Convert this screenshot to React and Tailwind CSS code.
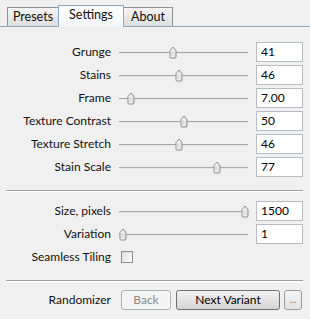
import React from "react";

const sliders1 = [
  { label: "Grunge", value: "41", pos: 0.41 },
  { label: "Stains", value: "46", pos: 0.46 },
  { label: "Frame", value: "7.00", pos: 0.065 },
  { label: "Texture Contrast", value: "50", pos: 0.5 },
  { label: "Texture Stretch", value: "46", pos: 0.46 },
  { label: "Stain Scale", value: "77", pos: 0.77 },
];

const sliders2 = [
  { label: "Size, pixels", value: "1500", pos: 1 },
  { label: "Variation", value: "1", pos: 0 },
];

function Thumb() {
  return (
    <svg width="9" height="13" viewBox="0 0 9 13" className="block">
      <defs>
        <linearGradient id="tg" x1="0" y1="0" x2="1" y2="0">
          <stop offset="0" stopColor="#ffffff" />
          <stop offset="1" stopColor="#dcdcdc" />
        </linearGradient>
      </defs>
      <path
        d="M1.5 4.5 L4.5 1 L7.5 4.5 L7.5 11 Q7.5 12 6.5 12 L2.5 12 Q1.5 12 1.5 11 Z"
        fill="url(#tg)"
        stroke="#8c8c8c"
        strokeWidth="1"
      />
      <line x1="3.5" y1="5" x2="3.5" y2="10" stroke="#c8c8c8" />
    </svg>
  );
}

function Slider({ pos }) {
  return (
    <div className="relative h-[23px] w-[129px]">
      <div className="absolute left-0 right-0 top-[12px] h-[2px] border-t border-[#a7a7a7] bg-[#e7e7e7]" />
      <div
        className="absolute top-[6px] -translate-x-1/2"
        style={{ left: `${4 + pos * 122}px` }}
      >
        <Thumb />
      </div>
    </div>
  );
}

function Row({ label, children }) {
  return (
    <div className="flex h-[23px] items-center">
      <div className="w-[111px] text-right">{label}</div>
      <div className="ml-[8px] flex items-center">{children}</div>
    </div>
  );
}

function SliderRow({ label, value, pos }) {
  return (
    <Row label={label}>
      <Slider pos={pos} />
      <div className="ml-[8px] flex h-[20px] w-[47px] items-center border border-[#b8bcc4] bg-white pl-[4px] text-black">
        {value}
      </div>
    </Row>
  );
}

function Separator() {
  return <div className="ml-[6px] mr-[7px] h-[2px] border-t border-[#a0a0a0] bg-white" />;
}

export default function App() {
  return (
    <div className="h-[319px] w-[310px] overflow-hidden bg-[#f0f0f0] font-['Lato',sans-serif] text-[12px] text-[#111]">
      <div className="relative flex h-[27px] items-end pl-[7px]">
        <div className="absolute bottom-0 left-0 right-0 h-px bg-[#8fa8c2]" />
        <div className="relative mb-px flex h-[19px] w-[52px] items-center justify-center border border-b-0 border-[#8d9299] bg-gradient-to-b from-[#f4f4f4] to-[#dedede] text-[12.5px]">
          Presets
        </div>
        <div className="relative z-10 -mx-px flex h-[22px] w-[66px] items-center justify-center border border-b-0 border-[#8fa8c2] bg-gradient-to-b from-white to-[#f3f6f9] pb-[2px] text-[12.5px]">
          Settings
        </div>
        <div className="relative mb-px flex h-[19px] w-[50px] items-center justify-center border border-b-0 border-[#8d9299] bg-gradient-to-b from-[#f4f4f4] to-[#dedede] text-[12.5px]">
          About
        </div>
      </div>

      <div className="pt-[13px]">
        {sliders1.map((s) => (
          <SliderRow key={s.label} {...s} />
        ))}
      </div>

      <div className="mt-[12px]">
        <Separator />
      </div>

      <div className="mt-[7px]">
        {sliders2.map((s) => (
          <SliderRow key={s.label} {...s} />
        ))}
        <Row label="Seamless Tiling">
          <div className="ml-[2px] h-[12px] w-[12px] border border-[#8f8f8f] bg-gradient-to-br from-[#dcdcdc] to-white" />
        </Row>
      </div>

      <div className="mt-[12px]">
        <Separator />
      </div>

      <div className="mt-[7px] flex h-[21px] items-center">
        <div className="w-[111px] text-right">Randomizer</div>
        <button className="ml-[10px] h-[20px] w-[50px] rounded-[3px] border border-[#adb2b5] bg-[#f4f4f4] text-[#8a8a8a]">
          Back
        </button>
        <button className="ml-[5px] h-[20px] w-[104px] rounded-[3px] border border-[#707070] bg-gradient-to-b from-[#f2f2f2] to-[#d4d4d4] text-black">
          Next Variant
        </button>
        <button className="ml-[4px] h-[20px] w-[18px] rounded-[3px] border border-[#9a9a9a] bg-gradient-to-b from-[#f6f6f6] to-[#e2e2e2] text-[9px] leading-none text-[#777]">
          ...
        </button>
      </div>
    </div>
  );
}
